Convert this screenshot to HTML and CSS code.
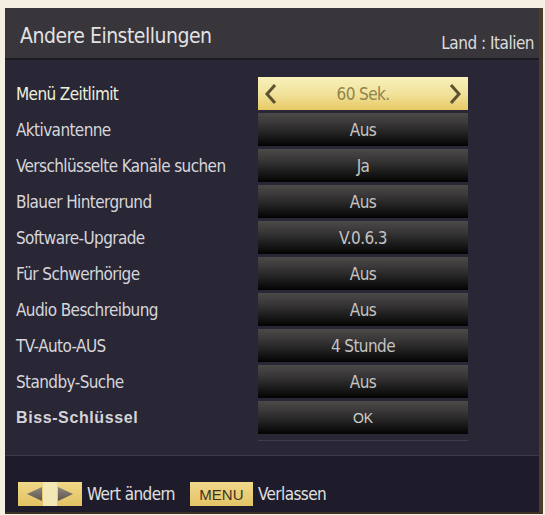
FILE: index.html
```html
<!DOCTYPE html>
<html lang="de">
<head>
<meta charset="utf-8">
<title>Andere Einstellungen</title>
<link rel="stylesheet" href="styles.css">
</head>
<body>
<div class="panel">
  <header class="head">
    <span class="title">Andere Einstellungen</span>
    <span class="land">Land : Italien</span>
  </header>
  <div class="head-sep"></div>
  <main class="list">
    <div class="rows">
      <div class="label sel">Menü Zeitlimit</div>
      <div class="val active">
        <svg class="chev" width="14" height="22" viewBox="0 0 14 22"><polyline points="11,2 3,11 11,20" fill="none" stroke="#5b5231" stroke-width="3"/></svg>
        <span>60 Sek.</span>
        <svg class="chev" width="14" height="22" viewBox="0 0 14 22"><polyline points="3,2 11,11 3,20" fill="none" stroke="#5b5231" stroke-width="3"/></svg>
      </div>
      <div class="label">Aktivantenne</div><div class="val">Aus</div>
      <div class="label">Verschlüsselte Kanäle suchen</div><div class="val">Ja</div>
      <div class="label">Blauer Hintergrund</div><div class="val">Aus</div>
      <div class="label">Software-Upgrade</div><div class="val">V.0.6.3</div>
      <div class="label">Für Schwerhörige</div><div class="val">Aus</div>
      <div class="label">Audio Beschreibung</div><div class="val">Aus</div>
      <div class="label">TV-Auto-AUS</div><div class="val">4 Stunde</div>
      <div class="label">Standby-Suche</div><div class="val">Aus</div>
      <div class="label alt">Biss-Schlüssel</div><div class="val alt">OK</div>
    </div>
    <div class="end-line"></div>
  </main>
  <div class="foot-sep"></div>
  <footer class="foot">
    <svg class="key-arrows" width="64" height="24" viewBox="0 0 64 24">
      <defs>
        <linearGradient id="kg" x1="0" y1="0" x2="0" y2="1">
          <stop offset="0" stop-color="#f0d888"/>
          <stop offset="1" stop-color="#e2c263"/>
        </linearGradient>
        <linearGradient id="tg" x1="0" y1="0" x2="0" y2="1">
          <stop offset="0" stop-color="#8f867c"/>
          <stop offset="1" stop-color="#5e564d"/>
        </linearGradient>
      </defs>
      <rect x="0" y="0" width="64" height="24" fill="url(#kg)"/>
      <rect x="25" y="0" width="14" height="24" fill="#f4e7b6"/>
      <polygon points="9,12 24,5 24,19" fill="url(#tg)"/>
      <polygon points="40,5 55,12 40,19" fill="url(#tg)"/>
    </svg>
    <span class="hint">Wert ändern</span>
    <span class="key-menu">MENU</span>
    <span class="hint">Verlassen</span>
  </footer>
</div>
</body>
</html>
```
FILE: styles.css
```css
html, body {
  margin: 0;
  padding: 0;
}
body {
  background: #f4efe0;
  width: 545px;
  height: 515px;
  padding: 8px 0 0 5px;
  box-sizing: border-box;
  font-family: "DejaVu Sans Condensed", "DejaVu Sans", sans-serif;
}
.panel {
  width: 534px;
  background: #292636;
  border-right: 4px solid #4a3e2b;
  border-bottom: 2px solid #3a3122;
  box-sizing: content-box;
}
.head {
  height: 50px;
  background: #38353b;
  display: flex;
  justify-content: space-between;
  align-items: flex-start;
  padding: 0 5px 0 15px;
  box-sizing: border-box;
}
.title {
  color: #e2e2e4;
  font-size: 21px;
  letter-spacing: -0.5px;
  line-height: 26px;
  margin-top: 15px;
}
.land {
  color: #dcdcde;
  font-size: 17px;
  letter-spacing: -0.5px;
  line-height: 20px;
  margin-top: 25px;
}
.head-sep {
  height: 2px;
  background: #1e1c24;
}
.list {
  padding: 17px 0 0 11px;
}
.rows {
  display: grid;
  grid-template-columns: 242px 210px;
  grid-auto-rows: 33px;
  row-gap: 3px;
}
.label {
  color: #d6d6da;
  font-size: 17px;
  letter-spacing: -0.6px;
  display: flex;
  align-items: center;
  white-space: nowrap;
}
.label.sel {
  color: #eef0da;
}
.label.alt {
  font-family: "Liberation Sans", Arial, sans-serif;
  font-size: 16px;
  font-weight: bold;
  letter-spacing: 0.6px;
  color: #d4d4d8;
}
.val {
  display: flex;
  align-items: center;
  justify-content: center;
  color: #c4c4c4;
  font-size: 17px;
  letter-spacing: -0.6px;
  background: linear-gradient(to bottom, #4c4949 0%, #3a3838 30%, #1c1b1b 70%, #030303 100%);
}
.val.alt {
  font-family: "Liberation Sans", Arial, sans-serif;
  font-size: 14px;
  letter-spacing: 0;
  color: #d0d0d0;
}
.val.active {
  justify-content: space-between;
  padding: 0 6px;
  color: #8d8450;
  background: linear-gradient(to bottom, #f8f0bb 0%, #f2e39c 50%, #e6c964 100%);
}
.chev {
  display: block;
}
.end-line {
  margin: 6px 0 0 242px;
  width: 210px;
  height: 1px;
  background: #3f3d4c;
}
.foot-sep {
  margin-top: 14px;
  height: 1px;
  background: #3a384a;
}
.foot {
  background: #1e1c2a;
  height: 56px;
  box-sizing: border-box;
  padding: 26px 0 6px 13px;
  display: flex;
  align-items: center;
}
.key-arrows {
  display: block;
  flex: none;
}
.hint {
  color: #e0e0e2;
  font-size: 17px;
  letter-spacing: -0.6px;
  margin-left: 5px;
}
.key-menu {
  margin-left: 15px;
  width: 63px;
  height: 24px;
  box-sizing: border-box;
  background: linear-gradient(to bottom, #f0d88a, #e3c466);
  color: #3d3422;
  font-family: "Liberation Sans", Arial, sans-serif;
  font-size: 15px;
  display: flex;
  align-items: center;
  justify-content: center;
}
```
